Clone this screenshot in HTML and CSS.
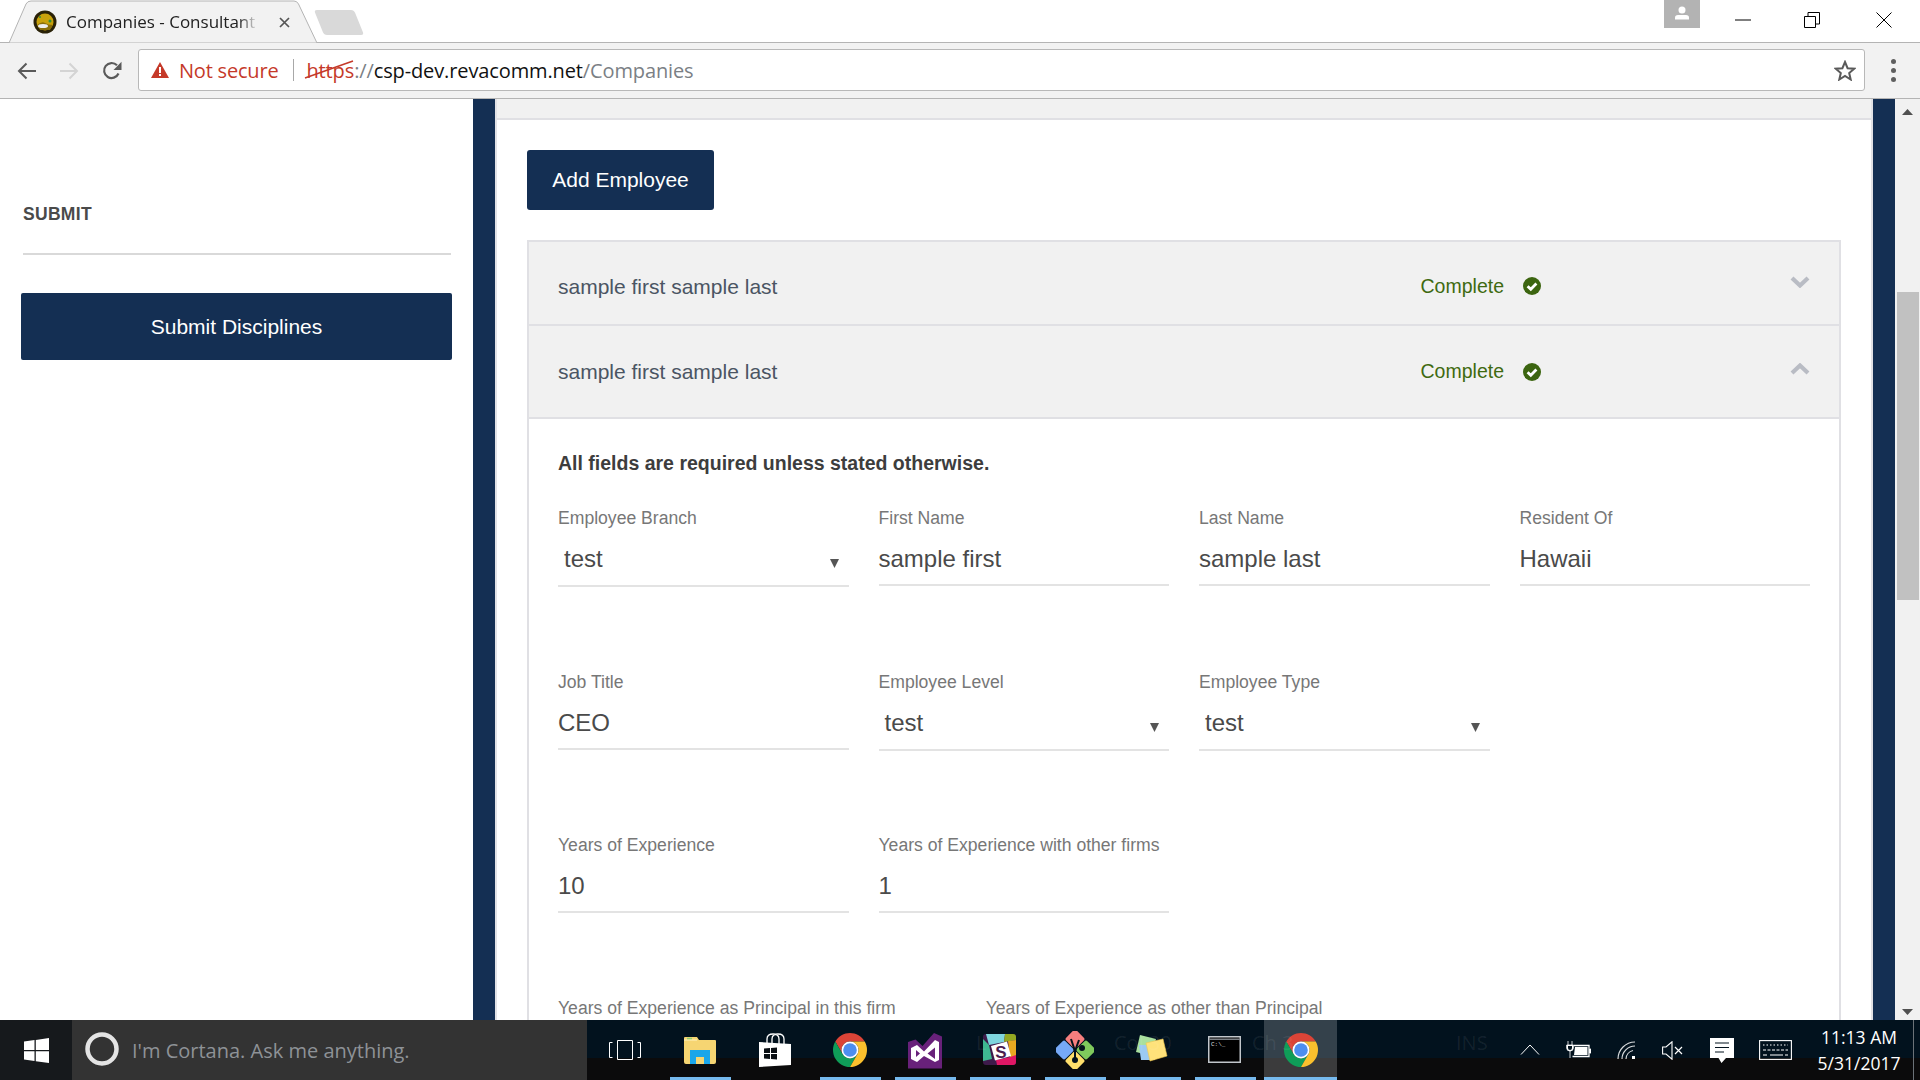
FILE: index.html
```html
<!DOCTYPE html>
<html lang="en">
<head>
<meta charset="utf-8">
<title>Companies - Consultant</title>
<link rel="stylesheet" href="styles.css">
</head>
<body>
<svg class="defs" width="0" height="0" aria-hidden="true">
  <symbol id="chrome" viewBox="4 4 40 40">
    <path fill="#db4437" d="M41.32 14A20 20 0 0 0 6.68 14L15.34 29A10 10 0 0 1 24 14Z"/>
    <path fill="#0f9d58" d="M6.68 14A20 20 0 0 0 24 44L32.66 29A10 10 0 0 1 15.34 29Z"/>
    <path fill="#fbc02d" d="M24 44A20 20 0 0 0 41.32 14L24 14A10 10 0 0 1 32.66 29Z"/>
    <circle cx="24" cy="24" r="10" fill="#fff"/>
    <circle cx="24" cy="24" r="8" fill="#4d8ef0"/>
  </symbol>
  <symbol id="okcircle" viewBox="0 0 18 18">
    <circle cx="9" cy="9" r="9" fill="#3c6510"/>
    <path d="M4.6 9.2 7.8 12.3 13.4 6.6" fill="none" stroke="#fff" stroke-width="2.8"/>
  </symbol>
  <symbol id="tri" viewBox="0 0 9 9"><path d="M0 0H9L4.5 9Z" fill="#555"/></symbol>
</svg>

<header class="browser">
  <div class="tabstrip">
    <div class="tab">
      <svg class="tab-shape" width="310" height="43" viewBox="0 0 310 43"><path d="M0 43 17 4Q18.500 1 22 1H285Q288 1 289.500 4L308 43Z" fill="#f2f2f2" stroke="#b4b4b4"/></svg>
      <svg class="favicon" width="24" height="24" viewBox="0 0 24 24">
        <circle cx="12" cy="12" r="11.500" fill="#2a2208"/>
        <circle cx="12" cy="12" r="8.500" fill="#c9a20c"/>
        <path d="M4 15Q9 11 12 13T20 15L17 20H7Z" fill="#8a6e0a"/>
        <ellipse cx="10" cy="16" rx="5" ry="2" fill="#eee"/>
        <circle cx="17" cy="11" r="1.500" fill="#2f8f3a"/>
        <circle cx="7" cy="7" r="1" fill="#2f8f3a"/>
      </svg>
      <span class="tab-title">Companies - Consultant</span>
      <svg class="tab-close" width="11" height="11" viewBox="0 0 11 11"><path d="M1 1 10 10M10 1 1 10" stroke="#555" stroke-width="1.700"/></svg>
    </div>
    <div class="newtab"></div>
    <div class="strip-space"></div>
    <div class="profile"><svg width="16" height="14" viewBox="0 0 16 14"><circle cx="8" cy="4" r="3.500" fill="#fff"/><path d="M1 13.500V11.500Q1 9 4 9H12Q15 9 15 11.500V13.500Z" fill="#fff"/></svg></div>
    <div class="winbtn win-min"><svg width="16" height="2" viewBox="0 0 16 2"><path d="M0 1H16" stroke="#000"/></svg></div>
    <div class="winbtn"><svg width="16" height="16" viewBox="0 0 16 16"><path d="M.5 4.500H11.500V15.500H.5ZM4 4.500V.5H15.500V12H11.500" fill="none" stroke="#000"/></svg></div>
    <div class="winbtn win-close"><svg width="16" height="16" viewBox="0 0 16 16"><path d="M.5 .5 15.500 15.500M15.500 .5 .5 15.500" stroke="#000" stroke-width="1"/></svg></div>
  </div>
  <div class="toolbar">
    <div class="navbtn back"><svg width="20" height="18" viewBox="0 0 20 18"><path d="M19 9H2M9.500 1.500 2 9 9.500 16.500" fill="none" stroke="#5a5a5a" stroke-width="2"/></svg></div>
    <div class="navbtn forward"><svg width="20" height="18" viewBox="0 0 20 18"><path d="M1 9H18M10.500 1.500 18 9 10.500 16.500" fill="none" stroke="#d4d4d4" stroke-width="2"/></svg></div>
    <div class="navbtn reload"><svg width="20" height="20" viewBox="0 0 20 20"><path d="M16.500 12.500A7.500 7.500 0 1 1 15 4.300" fill="none" stroke="#5a5a5a" stroke-width="2.200"/><path d="M19.500 .8V9H11.500Z" fill="#5a5a5a"/></svg></div>
    <div class="omnibox">
      <svg class="warn" width="18" height="16" viewBox="0 0 18 16"><path d="M9 0 18 16H0Z" fill="#c53929"/><path d="M8 5H10V11H8ZM8 12H10V14H8Z" fill="#fff"/></svg>
      <span class="not-secure">Not secure</span>
      <span class="omni-sep"></span>
      <span class="url"><span class="scheme"><span class="https">https</span>://<svg class="strike" width="50" height="19" viewBox="0 0 50 19"><path d="M1 18 49 1" stroke="#c53929" stroke-width="1.600"/></svg></span><span class="host">csp-dev.revacomm.net</span>/Companies</span>
      <svg class="star" width="22" height="21" viewBox="0 0 22 21"><path d="M11 2 13.600 8.200 20.200 8.700 15.200 13 16.700 19.500 11 16 5.300 19.500 6.800 13 1.800 8.700 8.400 8.200Z" fill="none" stroke="#5a5a5a" stroke-width="2"/></svg>
    </div>
    <div class="menu"><i></i><i></i><i></i></div>
  </div>
</header>

<main class="viewport">
  <aside class="sidebar">
    <h2 class="side-title">SUBMIT</h2>
    <hr class="side-rule">
    <button class="btn btn-wide">Submit Disciplines</button>
  </aside>
  <div class="stripe"></div>
  <section class="content">
    <div class="topband"></div>
    <div class="content-body">
      <button class="btn btn-add">Add Employee</button>
      <div class="accordion">
        <div class="acc-row acc-closed">
          <span class="acc-name">sample first sample last</span>
          <span class="acc-status">Complete</span>
          <svg class="acc-ok" width="18" height="18"><use href="#okcircle"/></svg>
          <svg class="acc-chev" width="20" height="12" viewBox="0 0 20 12"><path d="M2 2 10 9.500 18 2" fill="none" stroke="#b9bcc4" stroke-width="4.200"/></svg>
        </div>
        <div class="acc-row acc-open">
          <span class="acc-name">sample first sample last</span>
          <span class="acc-status">Complete</span>
          <svg class="acc-ok" width="18" height="18"><use href="#okcircle"/></svg>
          <svg class="acc-chev" width="20" height="12" viewBox="0 0 20 12"><path d="M2 10 10 2.500 18 10" fill="none" stroke="#b9bcc4" stroke-width="4.200"/></svg>
        </div>
        <div class="panel">
          <p class="required">All fields are required unless stated otherwise.</p>
          <div class="form-grid">
            <div class="field"><div class="lbl">Employee Branch</div><div class="val val-select"><span>test</span><svg width="9" height="9"><use href="#tri"/></svg></div></div>
            <div class="field"><div class="lbl">First Name</div><div class="val">sample first</div></div>
            <div class="field"><div class="lbl">Last Name</div><div class="val">sample last</div></div>
            <div class="field"><div class="lbl">Resident Of</div><div class="val">Hawaii</div></div>

            <div class="field"><div class="lbl">Job Title</div><div class="val">CEO</div></div>
            <div class="field"><div class="lbl">Employee Level</div><div class="val val-select"><span>test</span><svg width="9" height="9"><use href="#tri"/></svg></div></div>
            <div class="field"><div class="lbl">Employee Type</div><div class="val val-select"><span>test</span><svg width="9" height="9"><use href="#tri"/></svg></div></div>
            <div class="field"></div>

            <div class="field"><div class="lbl">Years of Experience</div><div class="val">10</div></div>
            <div class="field"><div class="lbl">Years of Experience with other firms</div><div class="val">1</div></div>
          </div>
          <div class="last-row">
            <div class="lbl">Years of Experience as Principal in this firm</div>
            <div class="lbl">Years of Experience as other than Principal</div>
          </div>
        </div>
      </div>
    </div>
  </section>
  <div class="stripe stripe-right"></div>
  <div class="scrollbar">
    <svg width="11" height="6" viewBox="0 0 11 6"><path d="M5.500 0 11 6H0Z" fill="#505050"/></svg>
    <div class="thumb"></div>
    <svg class="sb-down" width="11" height="6" viewBox="0 0 11 6"><path d="M0 0H11L5.500 6Z" fill="#505050"/></svg>
  </div>
</main>

<footer class="taskbar">
  <div class="start"><svg width="25" height="25" viewBox="0 0 25 25"><path d="M0 3.600 10.500 2.100V12H0ZM11.800 1.900 25 0V12H11.800ZM0 13.200H10.500V23L0 21.500ZM11.800 13.200H25V25L11.800 23.200Z" fill="#fff"/></svg></div>
  <div class="search">
    <svg width="36" height="36" viewBox="0 0 36 36"><circle cx="18" cy="18" r="14.500" fill="none" stroke="#e4e4e4" stroke-width="4.500"/></svg>
    <span class="search-text">I'm Cortana. Ask me anything.</span>
  </div>
  <div class="apps">
    <div class="app"><svg width="32" height="20" viewBox="0 0 32 20"><path d="M8.500 .5H23.500V19.500H8.500ZM3.500 2.500H.5V17.500H3.500M28.500 2.500H31.500V17.500H28.500" fill="none" stroke="#fff"/></svg></div>
    <div class="app app-on"><svg width="32" height="27" viewBox="0 0 32 27"><path d="M1 0H13L15 3H31Q32 3 32 4V25Q32 27 30 27H2Q0 27 0 25V1Q0 0 1 0Z" fill="#f6d572"/><path d="M0 3H13" stroke="#fff3c0" stroke-width="1"/><path d="M3 1.500H8" stroke="#8ccc70" stroke-width="1.500"/><path d="M6 27V13H26V27H20V20H12V27Z" fill="#1aa6ea"/></svg></div>
    <div class="app"><svg width="32" height="35" viewBox="0 0 32 35"><path d="M0 10 32 12V33L0 35Z M0 10Z" fill="#fff" transform="translate(0 -1)"/><path d="M8 10V6Q8 1 14 1T20 6V11M13 10V6Q13 1 19 1T25 6V11" fill="none" stroke="#fff" stroke-width="1.300"/><path d="M5 15.500 11 15V20H5ZM12 15 18 14.500V20H12ZM5 21H11V26L5 25.500ZM12 21H18V26.500L12 26Z" fill="#0a0f14"/></svg></div>
    <div class="app app-on"><svg width="34" height="34"><use href="#chrome"/></svg></div>
    <div class="app app-on"><svg width="34" height="36" viewBox="0 0 34 36"><path d="M26 0 34 3.500V35.500H0V9L7.500 6.500 14.500 13Z" fill="#68217a"/><path fill-rule="evenodd" d="M3 15 9 12 16 18.500 27 7 31 9V27L27 29 16 23 9 29 3 26ZM8 17V24L12 20.500ZM19.500 20.500 27 26V14.500Z" fill="#fff"/></svg></div>
    <div class="app app-on"><svg width="33" height="31" viewBox="0 0 33 31">
      <rect width="33" height="31" rx="3" fill="#3e1a4a"/>
      <path d="M3 0H22L21 8 6 11Z" fill="#7fd6de"/><path d="M22 0H30Q33 0 33 3V6L21 8Z" fill="#93a821"/>
      <path d="M25 7 33 6V23H27Z" fill="#e9a820"/><path d="M27 23 33 21V28Q33 31 30 31H14L13 26Z" fill="#e01765"/>
      <path d="M0 5 6 11 9 25 0 27Z" fill="#3eb991"/>
      <path d="M8 12 24 7.500 28 22 12 26.500Z" fill="#fff"/>
      <text class="slack-s" x="18" y="23.500" text-anchor="middle">S</text>
    </svg></div>
    <div class="app app-on"><svg width="38" height="38" viewBox="0 0 38 38">
      <g transform="rotate(45 19 19)">
        <rect x="4" y="4" width="14.500" height="14.500" rx="2" fill="#f67e7e"/>
        <rect x="19.500" y="4" width="14.500" height="14.500" rx="2" fill="#7fc95c"/>
        <rect x="19.500" y="19.500" width="14.500" height="14.500" rx="2" fill="#ffdf6b"/>
        <rect x="4" y="19.500" width="14.500" height="14.500" rx="2" fill="#76a9f7"/>
      </g>
      <path d="M15 8 19 20M23 9 19 20M19 20V29" stroke="#04121c" stroke-width="2"/>
      <circle cx="26" cy="17" r="3" fill="#04121c"/><circle cx="19" cy="29" r="3" fill="#04121c"/>
    </svg></div>
    <div class="app app-on"><svg width="36" height="36" viewBox="0 0 36 36">
      <path d="M8 1 24 5 20 22 4 18Z" fill="#a9e09e"/><path d="M7 11H23V26H9Z" fill="#9ccaf2"/><path d="M14 9 31 5 35 22 18 27Z" fill="#ffe27a" stroke="#f2c84e" stroke-width=".6"/>
    </svg></div>
    <div class="app app-on"><svg width="33" height="27" viewBox="0 0 33 27">
      <rect x=".75" y=".75" width="31.500" height="25.500" fill="#000" stroke="#c2c7cc" stroke-width="1.500"/>
      <path d="M1 2.500H32V4H1Z" fill="#7c8186"/>
      <text class="cmd-text" x="3" y="10">C:\_</text>
    </svg></div>
    <div class="app app-active"><svg width="34" height="34"><use href="#chrome"/></svg></div>
  </div>
  <div class="tray">
    <div class="tray-i ti-chev"><svg width="20" height="11" viewBox="0 0 20 11"><path d="M1 10.500 10 1 19 10.500" fill="none" stroke="#fff" stroke-width="1"/></svg></div>
    <div class="tray-i ti-batt"><svg width="25" height="18" viewBox="0 0 25 18"><path d="M7.500 4.500H23V15.500H6.500" fill="none" stroke="#fff" stroke-width="1.300"/><path d="M9 6H21.500V14H8Z" fill="#fff"/><path d="M23.500 8H25V12H23.500ZM2 0V4M6 0V4M.7 4H7.300V7Q7.300 10 4 10T.7 7ZM4 10V17" fill="#fff" stroke="#fff" stroke-width=".8"/><path d="M2 5H6V7Q6 9 4 9T2 7Z" fill="#03131e"/></svg></div>
    <div class="tray-i ti-wifi"><svg width="20" height="18" viewBox="0 0 20 18"><path d="M1 18A17 17 0 0 1 18 1M5 18A13 13 0 0 1 18 5M9 18A9 9 0 0 1 16 9.500" fill="none" stroke="#fff" stroke-width="1.200" opacity=".85"/><rect x="15" y="15" width="3" height="3" fill="#fff"/></svg></div>
    <div class="tray-i ti-vol"><svg width="21" height="19" viewBox="0 0 21 19"><path d="M.6 6H4L10 .8V18.200L4 13H.6Z" fill="none" stroke="#fff" stroke-width="1.100"/><path d="M13 6 20 13M20 6 13 13" stroke="#fff" stroke-width="1.200"/></svg></div>
    <div class="tray-i ti-note"><svg width="24" height="25" viewBox="0 0 24 25"><path d="M0 0H24V20H16L11.500 25 8.500 20H0Z" fill="#fff"/><path d="M5 5H19M5 9.500H19M5 14H14" stroke="#03131e" stroke-width="1.200"/></svg></div>
    <div class="tray-i ti-kbd"><svg width="33" height="20" viewBox="0 0 33 20"><rect x=".6" y=".6" width="31.800" height="18.800" fill="none" stroke="#fff" stroke-width="1.100"/><path d="M4 5H29" stroke="#fff" stroke-dasharray="1.500 2"/><path d="M4 10H29" stroke="#fff" stroke-dasharray="3 1.500"/><path d="M4 15H8M11 15H24M26 15H29" stroke="#fff"/></svg></div>
    <div class="clock"><div>11:13 AM</div><div>5/31/2017</div></div>
    <div class="show-desktop"></div>
  </div>
  <span class="ghost g-ln">L</span><span class="ghost g-col">Col 30</span><span class="ghost g-ch">Ch 3</span><span class="ghost g-ins">INS</span>
</footer>
</body>
</html>
```

FILE: styles.css
```css
* { box-sizing: border-box; }
html, body { margin: 0; height: 100%; }
body {
  width: 1920px;
  height: 1080px;
  overflow: hidden;
  display: flex;
  flex-direction: column;
  font-family: "Liberation Sans", Arial, sans-serif;
  background: #fff;
}
svg { display: block; flex: none; }
.defs { position: absolute; }

/* browser chrome */
.browser { flex: none; height: 99px; font-family: "Open Sans", "Noto Sans", sans-serif; }
.tabstrip {
  height: 43px;
  display: flex;
  background: #fff;
  border-bottom: 1px solid #b4b4b4;
}
.tab {
  position: relative;
  width: 308px;
  height: 43px;
  margin-left: 9px;
  padding: 10px 0 0 24px;
  display: flex;
  flex: none;
}
.tab-shape { position: absolute; left: 0; top: 0; }
.favicon { position: relative; }
.tab-title {
  position: relative;
  width: 192px;
  margin-left: 9px;
  font-size: 17px;
  line-height: 24px;
  color: #222;
  white-space: nowrap;
  overflow: hidden;
  -webkit-mask-image: linear-gradient(90deg, #000 90%, transparent 100%);
  mask-image: linear-gradient(90deg, #000 90%, transparent 100%);
}
.tab-close { position: relative; margin: 7px 0 0 21px; }
.newtab {
  width: 40px;
  height: 25px;
  margin: 10px 0 0 2px;
  background: #d9d9d9;
  border-radius: 3px;
  transform: skewX(22deg);
  flex: none;
}
.strip-space { flex: 1; }
.profile {
  width: 36px;
  height: 28px;
  background: #b3b3b3;
  display: flex;
  justify-content: center;
  padding-top: 6px;
  margin-right: 9px;
}
.winbtn {
  width: 70px;
  height: 40px;
  display: flex;
  align-items: center;
  justify-content: center;
}
.win-min { width: 68px; }
.win-close { width: 73px; }
.toolbar {
  height: 56px;
  background: #f2f2f2;
  border-bottom: 1px solid #b4b4b4;
  display: flex;
  align-items: center;
  padding-left: 5px;
}
.navbtn { width: 44px; height: 40px; display: flex; align-items: center; justify-content: center; flex: none; }
.forward { width: 40px; }
.reload { width: 46px; margin-right: 3px; }
.omnibox {
  width: 1727px;
  height: 42px;
  margin-top: -1px;
  background: #fff;
  border: 1px solid #b8b8b8;
  border-radius: 3px;
  display: flex;
  align-items: center;
  padding-left: 12px;
  font-size: 20px;
  flex: none;
}
.not-secure { color: #c53929; margin-left: 10px; letter-spacing: -.2px; }
.omni-sep { width: 1px; height: 22px; background: #a8a8a8; margin: 0 12px 0 15px; }
.url { color: #7b7f85; white-space: nowrap; flex: 1; letter-spacing: -.12px; }
.scheme { position: relative; display: inline-block; }
.https { color: #c53929; }
.host { color: #111; }
.strike { position: absolute; left: -2px; top: 3px; }
.star { margin-right: 8px; }
.menu { width: 55px; display: flex; flex-direction: column; align-items: center; gap: 4px; padding-left: 1px; flex: none; }
.menu i { width: 5px; height: 5px; border-radius: 50%; background: #5f5f5f; }

/* page */
.viewport { flex: 1; min-height: 0; display: flex; overflow: hidden; }
.sidebar { width: 473px; flex: none; padding: 104px 21px 0 21px; background: #fff; }
.side-title {
  margin: 0 0 0 2px;
  font-size: 17.500px;
  line-height: 22px;
  font-weight: 700;
  color: #4a4a4a;
  letter-spacing: .3px;
}
.side-rule { margin: 28px 1px 38px 2px; border: 0; height: 2px; background: #d9d9d9; }
.btn {
  display: block;
  border: 0;
  background: #142f53;
  color: #fff;
  font: 21px "Liberation Sans", Arial, sans-serif;
  border-radius: 2px;
}
.btn-wide { width: 431px; height: 67px; padding-top: 2px; }
.btn-add { width: 187px; height: 60px; border-radius: 3px; }
.stripe { width: 22px; flex: none; background: #142f53; }
.content {
  flex: none;
  width: 1378px;
  border-left: 2px solid #e2e2e6;
  border-right: 2px solid #e2e2e6;
  display: flex;
  flex-direction: column;
}
.topband { height: 21px; flex: none; background: #f1f1f1; border-bottom: 2px solid #e0e0e4; }
.content-body { padding: 30px 30px 0; }
.accordion { margin-top: 30px; border: 2px solid #e0e0e4; border-bottom: 0; background: #fff; }
.acc-row {
  display: flex;
  align-items: center;
  background: #f1f1f1;
  padding: 0 29px 0 29px;
  border-bottom: 2px solid #e0e0e4;
  color: #4b5563;
}
.acc-closed { height: 84px; }
.acc-open { height: 93px; }
.acc-name { font-size: 21px; line-height: 26px; flex: 1; margin-top: 1px; }
.acc-closed .acc-name { margin-top: 8px; }
.acc-status { font-size: 19.500px; color: #3f6a10; margin-top: 0; }
.acc-closed .acc-status { margin-top: 7px; }
.acc-ok { margin: 0 0 0 19px; }
.acc-closed .acc-ok { margin-top: 5px; }
.acc-chev { margin: -2px 0 0 249px; }
.acc-open .acc-chev { margin-top: -5px; }
.panel { padding: 31px 29px 0; }
.required { margin: 0; font-size: 19.500px; line-height: 26px; font-weight: 700; color: #3d3d3d; }
.form-grid {
  margin-top: 30px;
  display: grid;
  grid-template-columns: repeat(4, 1fr);
  column-gap: 30px;
  grid-auto-rows: 163.500px;
}
.lbl { font-size: 17.600px; line-height: 24px; color: #777; white-space: nowrap; }
.val {
  height: 56px;
  border-bottom: 2px solid #e3e3e3;
  font-size: 24px;
  line-height: 58px;
  color: #4a4a4a;
  display: flex;
  justify-content: space-between;
}
.val-select { padding: 0 10px 0 6px; height: 57px; }
.val-select svg { margin-top: 29px; }
.last-row { display: flex; gap: 90px; margin-top: -1px; }

/* scrollbar */
.scrollbar {
  width: 25px;
  flex: none;
  background: #f1f1f1;
  display: flex;
  flex-direction: column;
  align-items: center;
  padding-top: 10px;
  position: relative;
}
.thumb { width: 22px; height: 308px; background: #c1c1c1; margin-top: 177px; }
.sb-down { margin-top: auto; margin-bottom: 5px; }

/* taskbar */
.taskbar {
  position: relative;
  flex: none;
  height: 60px;
  display: flex;
  font-family: "Open Sans", "Noto Sans", sans-serif;
  background: linear-gradient(180deg, #02121e 0, #02121e 38px, #0b0b0c 38px, #0b0b0c 100%);
}
.start {
  width: 72px;
  flex: none;
  background: #16191c;
  display: flex;
  justify-content: center;
  padding-top: 18px;
}
.search {
  width: 515px;
  flex: none;
  background: #333;
  display: flex;
  align-items: center;
  padding: 0 0 0 12px;
}
.search svg { margin-top: -2px; }
.search-text { margin-left: 12px; margin-top: 1px; font-size: 20px; color: #8e9297; }
.apps { display: flex; flex: none; width: 750px; }
.app {
  position: relative;
  width: 75px;
  height: 60px;
  flex: none;
  display: flex;
  justify-content: center;
  padding-top: 13px;
}
.app:nth-child(1) { padding-top: 20px; }
.app:nth-child(2) { padding-top: 17px; }
.app:nth-child(6) { padding-top: 14px; }
.app:nth-child(7) { padding-top: 11px; }
.app:nth-child(8) { padding-top: 14px; }
.app:nth-child(9) { padding-top: 16px; }
.app-on::after, .app-active::after {
  content: "";
  position: absolute;
  left: 8px;
  right: 6px;
  bottom: 0;
  height: 3px;
  background: #76b9ed;
}
.app-active { background: rgba(255,255,255,.2); margin-left: 2px; width: 73px; }
.app-active::after { left: 0; right: 0; }
.slack-s { font: 700 17px "Liberation Sans", sans-serif; fill: #4a1d4f; }
.cmd-text { font: 6px "Liberation Mono", monospace; fill: #ddd; }
.tray { margin-left: auto; display: flex; flex: none; color: #fff; }
.tray-i { display: flex; justify-content: center; flex: none; }
.ti-chev { width: 50px; padding-top: 24px; }
.ti-batt { width: 46px; padding-top: 21px; }
.ti-wifi { width: 52px; padding-top: 21px; }
.ti-vol { width: 38px; padding-top: 21px; }
.ti-note { width: 62px; padding-top: 18px; }
.ti-kbd { width: 44px; padding-top: 20px; }
.clock {
  width: 116px;
  padding: 4px 0 0 8px;
  text-align: center;
  font-size: 17.500px;
  line-height: 26px;
  flex: none;
}
.show-desktop { width: 7px; border-left: 1px solid #6b7278; flex: none; }
.ghost { position: absolute; top: 9px; font-size: 20px; line-height: 27px; color: rgba(255,255,255,.08); }
.g-ln { left: 976px; }
.g-col { left: 1114px; }
.g-ch { left: 1252px; }
.g-ins { left: 1456px; }
```
